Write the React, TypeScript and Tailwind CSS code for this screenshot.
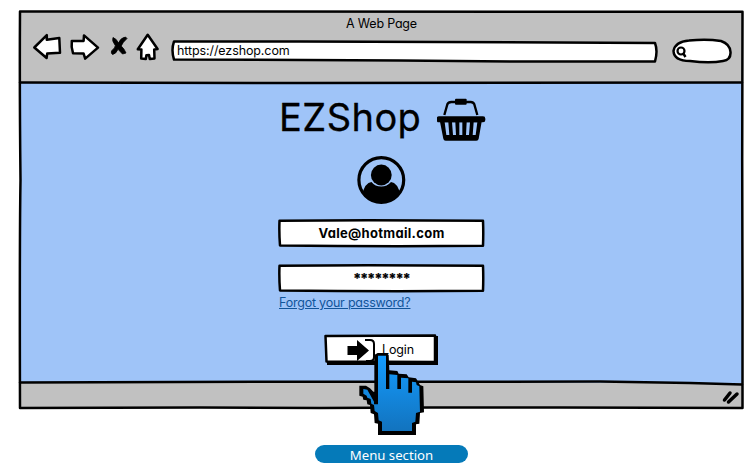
import React from "react";

const sketch = {
  fill: "none",
  stroke: "#000",
  strokeWidth: 2.5,
  strokeLinejoin: "round" as const,
  strokeLinecap: "round" as const,
};

const font = "font-['Inter','Liberation_Sans',sans-serif] [font-feature-settings:'cv11'] whitespace-nowrap";

function NavIcons() {
  return (
    <svg className="w-[134px] h-[34px] shrink-0" viewBox="30 30 134 34">
      <g {...sketch} fill="#fff">
        <path d="M34.3 47.5 L46.8 35.2 L46.8 39.8 L59.3 38 L60 52.8 L47.2 53.6 L46.6 58 Z" />
        <path d="M71.8 41 L83.6 41 L84 35.4 L98 47.6 L85.2 58.6 L83.6 53.6 L73 53.2 Q71 47 71.8 41 Z" />
        <path d="M147.7 34.8 L157.6 49 L154.2 49.5 L154.5 58.4 L149.8 59 L149 55 L146.4 55.2 L145.8 59 L141.2 58.6 L141.4 49.5 L137.8 49.3 Z" />
      </g>
      <path
        d="M113 37.500 Q117 39 118.300 43 Q121 37.500 125.500 37 L127 38.500 Q122.500 42.500 121.200 46 Q124.500 49 126 53 L122.500 54 L118 49.300 Q116 54 112.500 54.500 Q110.800 53.500 111.500 51 Q115.500 47.500 115.300 45.500 Q111.500 40.500 113 37.500 Z"
        stroke="#000"
        strokeWidth="0.8"
        strokeLinejoin="round"
      />
    </svg>
  );
}

function Basket() {
  return (
    <svg className="mt-px w-[50px] h-[44px]" viewBox="503 25 150 132">
      <path d="M525 76 L534 44 Q537 37 546 37 L604 37 Q612 37 615 44 L624 76" fill="none" stroke="#000" strokeWidth="7" />
      <rect x="557" y="27" width="35" height="18" rx="3" />
      <rect x="502" y="80" width="146" height="18" rx="7" />
      <path
        fillRule="evenodd"
        d="M512 96 H637 L628 147 Q627 153 621 153 H529 Q523 153 522 147 Z M526 98 L531 136 H540 L537 98 Z M548 98 L551 136 H560 L558 98 Z M570 98 V136 H579 V98 Z M592 98 L590 136 H599 L602 98 Z M613 98 L610 136 H619 L624 98 Z"
      />
    </svg>
  );
}

function Avatar() {
  return (
    <svg className="w-[50px] h-[50px]" viewBox="0 0 50 50">
      <defs>
        <clipPath id="face">
          <circle cx="25.300" cy="25" r="23" />
        </clipPath>
      </defs>
      <circle cx="25.300" cy="25" r="22.400" fill="none" stroke="#000" strokeWidth="3.200" />
      <g clipPath="url(#face)">
        <path d="M6 40 Q9 27.500 15.500 27 Q19 31.500 25.300 31.500 Q31 31.500 35 27 Q41.500 27.500 44.500 40 L38 50 H12 Z" />
      </g>
      <circle cx="25.300" cy="20" r="10.400" />
    </svg>
  );
}

function Field({ children, className }: { children: React.ReactNode; className: string }) {
  return (
    <div className={`relative w-[207px] h-[29px] ${className}`}>
      <svg className="absolute inset-0 w-full h-full" viewBox="0 0 207 29">
        <path {...sketch} fill="#fff" d="M1.500 1.800 L90 1.300 L205 1.800 Q205.500 14 205 26.700 L120 27.300 L60 27 L2 26.500 Q1 14 1.500 1.800 Z" />
      </svg>
      <div className={`relative text-center font-bold ${font}`}>{children}</div>
    </div>
  );
}

function Hand() {
  return (
    <svg className="absolute left-[358px] top-[351px] w-[68px] h-[86px]" viewBox="144 78 204 258">
      <defs>
        <linearGradient id="hand" x1="0" y1="0" x2="0" y2="1">
          <stop offset="0" stopColor="#149cff" />
          <stop offset="1" stopColor="#1273be" />
        </linearGradient>
      </defs>
      <path d="M203 84 H230 L236 90 L238 136 L262 138 L266 146 L290 148 L296 157 L318 160 L330 180 L340 184 L342 262 L330 264 L328 296 L318 298 V330 H204 V296 L194 294 L192 268 L182 264 L180 240 L172 238 L170 226 L160 224 L158 215 L148 212 V182 H168 L180 190 L190 200 H193 V90 Z" />
      <path
        fill="url(#hand)"
        d="M204 92 H228 V192 H238 V148 L262 150 V192 H273 V158 L295 160 V203 H306 V170 L318 172 L320 180 L328 184 L330 260 L318 264 L316 290 L306 294 V318 H216 V290 L206 286 L204 264 L194 258 L192 240 L184 236 L182 222 L172 218 L170 212 L160 206 V192 L172 194 L182 212 L192 230 V238 H204 Z"
      />
    </svg>
  );
}

export default function App() {
  return (
    <div className="relative w-[756px] h-[467px] overflow-hidden bg-white text-black">
      <div className="relative ml-[20px] pt-[11px] w-[723px] flex flex-col">
        <header className="h-[72px] bg-[#c1c1c1]">
          <div className={`h-[24px] pt-[4px] text-center text-[12.5px] leading-[17px] ${font}`}>
            <span className="tracking-[-0.2px]">A Web Page</span>
          </div>
          <div className="flex items-start pl-[10px] -mt-[5px]">
            <NavIcons />
            <div className="relative ml-[6px] mt-[10px] w-[490px] h-[24px]">
              <svg className="absolute inset-0 w-full h-full" viewBox="170 40 490 24">
                <path {...sketch} fill="#fff" d="M174 41.500 L300 41.500 L440 42 L655 43 Q658 51 655 61.500 L520 61.500 L400 60.500 L174 59.500 Q171 50 174 41.500 Z" />
              </svg>
              <div className={`relative pl-[7px] pt-[2px] text-[12.5px] leading-[17px] tracking-[-0.1px] ${font}`}>https://ezshop.com</div>
            </div>
            <svg className="ml-[10px] mt-[8px] w-[64px] h-[28px]" viewBox="670 38 64 28">
              <path {...sketch} fill="#fff" d="M673.500 51 Q675 42 689 40.600 Q706 38.500 721 41 Q730 44 730.500 52 Q731 60 723 61 Q710 63.500 690 61 Q674 61 673.500 51 Z" />
              <circle cx="681" cy="51" r="3.500" fill="none" stroke="#000" strokeWidth="2.200" />
              <path d="M683 53 L685.500 57" stroke="#000" strokeWidth="2.400" />
            </svg>
          </div>
        </header>
        <main className="h-[300px] bg-[#9fc4f8]">
          <div className="ml-[258px] flex flex-col items-start">
            <div className="flex h-[70px] pt-[14px]">
              <h1 className={`w-[159px] pl-[1px] -mt-[2px] text-[38px] leading-[44px] tracking-[0.45px] [-webkit-text-stroke:0.3px_black] ${font}`}>EZShop</h1>
              <Basket />
            </div>
            <div className="ml-[78px] h-[66px] pt-[2px]">
              <Avatar />
            </div>
            <Field className="">
              <span className="text-[13px] leading-[28px] tracking-[0.3px]">Vale@hotmail.com</span>
            </Field>
            <Field className="mt-[16px]">
              <span className="text-[14px] leading-[29px] tracking-[-0.75px] [-webkit-text-stroke:0.2px_black]">********</span>
            </Field>
            <a className={`ml-[1px] mt-[1px] text-[12.5px] leading-[17px] tracking-[-0.22px] text-[#11559a] underline underline-offset-1 ${font}`}>Forgot your password?</a>
            <div className="relative ml-[46px] mt-[22px] w-[116px] h-[34px]">
              <svg className="absolute inset-0 w-full h-full" viewBox="324 333 116 34">
                <path d="M435 337 H437 V364 H328 V361 H435 Z" stroke="#000" strokeWidth="2" />
                <path {...sketch} fill="#fff" d="M325.500 336 L435 335.500 L435 362 L326.500 361.500 Z" />
                <path d="M347.500 346 H357 V340 L369 350.500 L357 361 V355 H347.500 Z" />
                <path d="M365 340 H370 Q374 340 374 344 V357 Q374 361 370 361 H366" fill="none" stroke="#000" strokeWidth="2" />
              </svg>
              <div className={`relative pl-[58px] pt-[8px] text-[12.5px] leading-[17px] tracking-[-0.15px] ${font}`}>Login</div>
            </div>
          </div>
        </main>
        <footer className="h-[25px] bg-[#c1c1c1]" />
        <svg className="absolute left-[-2px] top-[9px] w-[728px] h-[402px]" viewBox="18 9 728 402">
          <g {...sketch}>
            <path d="M20 11.500 L742.500 11.800 L742.200 160 L742.500 300 L742.500 408 L560 407.500 L430 407.500 L320 408 L200 407.500 L20 408 Q19.500 240 20.500 180 Q19.500 90 20 11.500 Z" />
            <path d="M20 82.500 L300 83 L742 82.500" />
            <path d="M20 382.500 L280 381.700 L420 381.800 L600 381.500 L690 383 L742 384.500" />
          </g>
          <path d="M724.500 400 L730 393 M728.500 402 L737 394" stroke="#000" strokeWidth="3.500" strokeLinecap="round" />
        </svg>
      </div>
      <Hand />
      <div className="absolute left-[315px] top-[445px] w-[153px] h-[18px] rounded-full bg-[#057ab9] text-center text-white text-[13.2px] leading-[20px] font-['Noto_Sans','Open_Sans',sans-serif]">
        Menu section
      </div>
    </div>
  );
}
